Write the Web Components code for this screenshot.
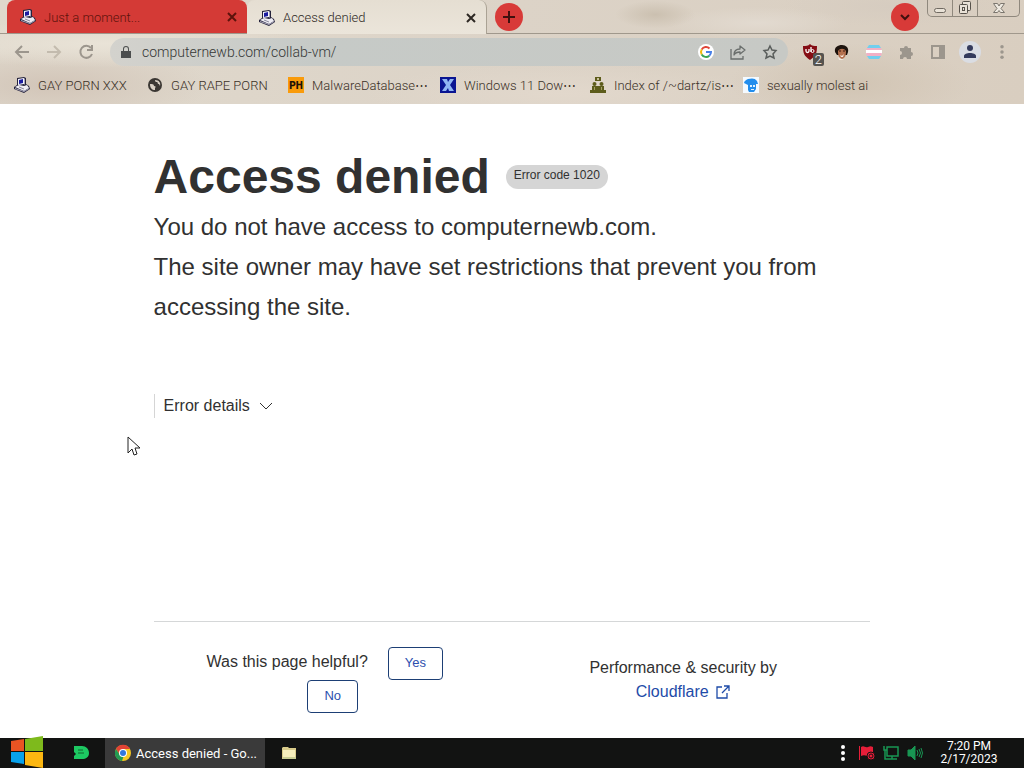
<!DOCTYPE html>
<html lang="en">
<head>
<meta charset="utf-8">
<meta name="viewport" content="width=device-width, initial-scale=1">
<title>Access denied</title>
<style>
    html, body {
        height: 100%;
        margin: 0;
    }

    body {
        font-family: Roboto, "Liberation Sans", sans-serif;
        font-size: 13px;
        background: #fff;
    }
</style>
</head>
<body>
<vm-desktop></vm-desktop>

<script>
const icons = {
    pc: `<svg viewBox="0 0 16 16"><path d="M3 1l7-1 2 1v6l3 2 1 3-6 4-10-4v-2l3-2z" fill="#25233c"/><path d="M4 2l6-1v6l-6 1z" fill="#f4f4fb"/><path d="M5 3l4-1v4l-4 1z" fill="#1b1ba0"/><path d="M10 1l1 1v6l-1-1z" fill="#a9a7bd"/><path d="M1 10l4-2 5 1 3-1 2 3-5 3z" fill="#efedf4"/><path d="M1 11l9 3v1l-9-3zM10 14l5-3v1l-5 3z" fill="#aaa8bb"/><path d="M5 10l5 2" stroke="#8a889b"/></svg>`,
    globe: `<svg viewBox="0 0 16 16"><circle cx="8" cy="8" r="7" fill="#3b3733"/><path d="M3 7c2 0 4 0 4 2 2 0 2 1 1 2v2c-3 0-5-2-5-6zM8 3c0 2 1 2 2 2s0 2 2 2l1 2c1-3-1-6-5-6z" fill="#d8cfc3"/></svg>`,
    ph: `<svg viewBox="0 0 16 16"><path d="M0 0h16v16H0z" fill="#f99b0b"/><text x="8" y="12" font-size="10" font-weight="900" text-anchor="middle" fill="#1c1206" font-family="Roboto">PH</text></svg>`,
    x: `<svg viewBox="0 0 16 16"><path d="M0 0h16v16H0z" fill="#0a1592"/><path d="M2 2h5l1 3 2-3h4l-4 6 4 6h-5l-1-3-2 3H2l4-6z" fill="#8fb5f3"/></svg>`,
    index: `<svg viewBox="0 0 16 16" fill="#5d5c1b"><path d="M5 0h6v4H5z"/><path d="M7 1h2v2H7z" fill="#c9c19b"/><circle cx="4.500" cy="7" r="2"/><circle cx="11.500" cy="7" r="2"/><path d="M2 9h12v4h2v3H0v-3h2z"/><path d="M4 10h1v3H4zM11 10h1v3h-1z" fill="#a59f66"/></svg>`,
    face: `<svg viewBox="0 0 16 16"><path d="M0 0h16v16H0z" fill="#f4faff"/><path d="M1 6c0-2 2-3 4-4 4-1 7-1 9 2l1 3h-2v5l-2 3H6l-1-2V8z" fill="#238eed"/><path d="M7 8h2v2H7zM10 8h2v2h-2zM8 12h3v1H8z" fill="#e2f2ff"/></svg>`,
    back: `<svg viewBox="0 0 16 16" fill="none" stroke="currentColor" stroke-width="2"><path d="M15 8H2M8 2L2 8l6 6"/></svg>`,
    forward: `<svg viewBox="0 0 16 16" fill="none" stroke="currentColor" stroke-width="2"><path d="M1 8h13M8 2l6 6-6 6"/></svg>`,
    reload: `<svg viewBox="0 0 16 16" fill="none" stroke="currentColor" stroke-width="2"><path d="M13 4a6 6 0 1 0 1 6"/><path d="M14 1v5H9"/></svg>`,
    lock: `<svg viewBox="0 0 16 16"><path d="M5 7V5a3 3 0 0 1 6 0v2h2v7H3V7zm1 0h4V5a2 2 0 0 0-4 0z" fill="#4c4e4e"/></svg>`,
    google: `<svg viewBox="0 0 16 16" fill="none" stroke-width="2"><circle cx="8" cy="8" r="8" fill="#fff"/><path d="M11.500 4.500A5 5 0 0 0 3.700 5.500" stroke="#df4639"/><path d="M3.700 5.500a5 5 0 0 0 0 5" stroke="#f2b90c"/><path d="M3.700 10.500a5 5 0 0 0 7.600 1.200" stroke="#39a652"/><path d="M11.300 11.700A5 5 0 0 0 13 8H8" stroke="#4780e8"/></svg>`,
    share: `<svg viewBox="0 0 16 16" fill="none" stroke="#6a6e6c" stroke-width="1.300"><path d="M1 5v10h12v-3"/><path d="M4 11c0-4 2-6 6-6V2l5 4-5 4V8c-3 0-5 1-6 3z" stroke-linejoin="round"/></svg>`,
    star: `<svg viewBox="0 0 16 16" fill="none" stroke="#5a5e5c" stroke-width="1.500"><path d="M8 2l2 4 4 .500-3 3.500 1 4-4-2-4 2 1-4-3-3.500L6 6z"/></svg>`,
    shield: `<svg viewBox="0 0 16 16"><path d="M8 0c2 2 4 2 7 2 0 7-1 10-7 14C2 12 1 9 1 2c3 0 5 0 7-2z" fill="#850d14"/><path d="M4 5v2a1 1 0 0 0 3 0V5M9 3v5" stroke="#fff" stroke-width="1.300" fill="none"/><circle cx="10.500" cy="7" r="1.500" stroke="#fff" fill="none"/></svg>`,
    man: `<svg viewBox="0 0 16 16"><path d="M1 8C0 3 4 1 8 1s7 3 6 7l-1 3H3z" fill="#1d130d"/><path d="M4 7c2-3 6-3 8 0 0 5-1 7-4 8-3-1-4-3-4-8z" fill="#b4714f"/><path d="M5 7h2M9 7h2" stroke="#38190f"/><path d="M6 11q2 2 4-1l-1 3H7z" fill="#f8e9df"/><path d="M4 13l3 2h3l-2 1H5z" fill="#f0e8df"/></svg>`,
    flag: `<svg viewBox="0 0 16 16"><path d="M3 1h10l2 3H1z" fill="#71cfee"/><path d="M1 4h14l1 3H0z" fill="#f2b0c5"/><path d="M0 6h16v4H0z" fill="#fff"/><path d="M0 9h16l-1 3H1z" fill="#f2b0c5"/><path d="M1 12h14l-2 3H3z" fill="#71cfee"/></svg>`,
    puzzle: `<svg viewBox="0 0 16 16"><path d="M2 4h4a2 2 0 1 1 4 0h3v4a2 2 0 1 1 0 4v3H9a2 2 0 0 0-4 0H2v-4a2 2 0 0 0 0-4z" fill="#9c968d"/></svg>`,
    panel: `<svg viewBox="0 0 16 16"><path d="M1 1h14v14H1zm2 2v10h6V3z" fill="#9c968d" fill-rule="evenodd"/></svg>`,
    person: `<svg viewBox="0 0 24 24"><circle cx="12" cy="12" r="11" fill="#dadde3"/><circle cx="12" cy="8" r="3" fill="#343b5c"/><path d="M6 18v-2c0-4 12-4 12 0v2z" fill="#343b5c"/></svg>`,
    dots: `<svg viewBox="0 0 16 16" fill="currentColor"><circle cx="8" cy="2" r="2"/><circle cx="8" cy="8" r="2"/><circle cx="8" cy="14" r="2"/></svg>`,
    close: `<svg viewBox="0 0 16 16" fill="none" stroke="currentColor" stroke-width="2"><path d="M4 4l8 8M12 4l-8 8"/></svg>`,
    plus: `<svg viewBox="0 0 16 16" fill="none" stroke="currentColor" stroke-width="2"><path d="M8 2v12M2 8h12"/></svg>`,
    down: `<svg viewBox="0 0 16 16" fill="none" stroke="currentColor" stroke-width="2"><path d="M4 6l4 4 4-4"/></svg>`,
    chevron: `<svg viewBox="0 0 16 16" fill="none" stroke="currentColor"><path d="M2 5l6 6 6-6"/></svg>`,
    minimize: `<svg viewBox="0 0 16 16" fill="#e9e2d7" stroke="#6f6961"><rect x="2.500" y="8.500" width="11" height="4" rx="2"/></svg>`,
    restore: `<svg viewBox="0 0 16 16" fill="#e9e2d7" stroke="#57524b"><rect x="5.500" y="1.500" width="8" height="9" rx="1"/><rect x="2.500" y="4.500" width="8" height="9" rx="1"/><rect x="5.500" y="7.500" width="2" height="3"/></svg>`,
    quit: `<svg viewBox="0 0 16 16" fill="#eee9e0" stroke="#7b766e"><path d="M2.500 3.500h4L8 6l1.500-2.500h4l-3.500 5 3.500 4h-4L8 10.500l-1.500 2h-4l3.500-4z"/></svg>`,
    external: `<svg viewBox="0 0 16 16" fill="none" stroke="currentColor" stroke-width="1.300"><path d="M7 3H2v11h10V9M9 2h5v5M14 2L7 9"/></svg>`,
    windows: `<svg viewBox="0 0 32 32"><path d="M0 5l13-2v12H0z" fill="#ea5423"/><path d="M14 3l18-3v15H14z" fill="#7eba1c"/><path d="M0 16h13v12L0 26z" fill="#08a2ec"/><path d="M14 16h18v16l-18-3z" fill="#fcb711"/></svg>`,
    green: `<svg viewBox="0 0 16 16"><path d="M1 1h8c4 0 7 3 7 7s-3 6-7 6H1v-3l2-2-2-2z" fill="#1dc962"/><path d="M5 5h5M5 8h6" stroke="#12672f"/></svg>`,
    chrome: `<svg viewBox="0 0 16 16"><circle cx="8" cy="8" r="8" fill="#f5c722"/><path d="M1 4a8 8 0 0 1 14 0H8L5 10z" fill="#e24335"/><path d="M1 4l4 6h4l-2 6A8 8 0 0 1 1 4z" fill="#229a52"/><circle cx="8" cy="8" r="4" fill="#fff"/><circle cx="8" cy="8" r="3" fill="#3277dd"/></svg>`,
    folder: `<svg viewBox="0 0 16 16"><path d="M1 3l1-1h5l1 1h7v11H1z" fill="#d9cc8b"/><path d="M2 5h12v8H2z" fill="#f5eebd"/><path d="M2 12h13v2H2z" fill="#c9ce94"/></svg>`,
    alert: `<svg viewBox="0 0 16 16"><path d="M0 1h1v14H0z" fill="#e61e39"/><path d="M2 2c3-2 4 1 7 0 2-1 3-1 5 0v9c-3-1-3 1-6 0-2-1-4-1-6 0z" fill="#e61e39"/><circle cx="12" cy="11" r="4" fill="#e61e39" stroke="#111"/><circle cx="12" cy="11" r="2" fill="none" stroke="#111"/></svg>`,
    network: `<svg viewBox="0 0 16 16" fill="none" stroke="#189653" stroke-width="1.500"><path d="M4 2h11v9H4zM9 11v3M5 14h9M1 1v4h3M2 5v9h3"/></svg>`,
    sound: `<svg viewBox="0 0 16 16" fill="none" stroke="#189653"><path d="M1 5h3l4-4v14l-4-4H1z" fill="#189653"/><path d="M10 5q2 3 0 6M12 4q3 4 0 8M14 3q3 5 0 10"/></svg>`,
    cursor: `<svg viewBox="0 0 14 20"><path d="M1 1v16l4-4 2 6 3-1-2-6h5z" fill="#fff" stroke="#222" stroke-linejoin="round"/></svg>`
};

function define(name, html) {
    const template = document.createElement('template');
    template.innerHTML = html;

    window.customElements.define(name, class extends HTMLElement {
        constructor() {
            super();
            this.attachShadow({ mode: 'open' });
            this.shadowRoot.appendChild(template.content.cloneNode(true));

            // the host's label names the control inside
            const control = this.shadowRoot.querySelector('[data-label]');
            if (control && this.getAttribute('label')) {
                control.setAttribute('aria-label', this.getAttribute('label'));
            }
        }
    });
}

class UiIcon extends HTMLElement {
    constructor() {
        super();
        this.attachShadow({ mode: 'open' });
    }

    connectedCallback() {
        this.shadowRoot.innerHTML = `
            <style>
                :host {
                    display: block;
                    flex: none;
                    width: var(--icon-size, 16px);
                }

                svg {
                    display: block;
                    width: 100%;
                    overflow: visible;
                }
            </style>
            ${icons[this.getAttribute('name')]}
        `;
    }
}

window.customElements.define('ui-icon', UiIcon);

define('icon-button', `
    <style>
        :host {
            display: block;
            flex: none;
            width: 32px;
            color: #9c968d;
        }

        button {
            display: flex;
            position: relative;
            align-items: center;
            justify-content: center;
            width: 100%;
            height: 28px;
            padding: 0;
            border: 0;
            color: inherit;
            font: inherit;
            background: none;
        }

        ::slotted(span) {
            position: absolute;
            right: 2px;
            bottom: 0;
            padding: 0 2px;
            border-radius: 2px;
            color: #fff;
            line-height: 13px;
            background: #55534f;
        }
    </style>
    <button type="button" data-label><slot></slot></button>
`);

define('round-button', `
    <style>
        :host {
            display: block;
            flex: none;
            margin-top: 3px;
        }

        button {
            display: flex;
            align-items: center;
            justify-content: center;
            width: 28px;
            height: 28px;
            padding: 0;
            border: 0;
            border-radius: 50%;
            color: #40100e;
            background: #d83a38;
        }
    </style>
    <button type="button" data-label><slot></slot></button>
`);

define('browser-tab', `
    <style>
        :host {
            display: flex;
            box-sizing: border-box;
            flex: 0 1 240px;
            align-items: center;
            gap: 8px;
            min-width: 0;
            height: 33px;
            padding: 1px 7px 0 13px;
            border-radius: 8px 8px 0 0;
            color: #5c130c;
            background: #d43a36;
        }

        :host([active]) {
            height: 34px;
            padding-left: 12px;
            border-right: 1px solid #aaa294;
            color: #2d2823;
            background: linear-gradient(#e5ded2, #ebe5da);
        }

        a {
            overflow: hidden;
            flex: 1;
            color: inherit;
            text-decoration: none;
            white-space: nowrap;
        }

        button {
            padding: 0;
            border: 0;
            color: inherit;
            background: none;
        }
    </style>
    <slot name="icon"></slot>
    <a href="#"><slot></slot></a>
    <button type="button" aria-label="Close tab"><ui-icon name="close"></ui-icon></button>
`);

define('window-buttons', `
    <style>
        :host {
            display: flex;
            flex: none;
            border: 1px solid #8f887d;
            border-top: 0;
            border-radius: 0 0 5px 5px;
        }

        button {
            display: flex;
            align-items: center;
            justify-content: center;
            width: 25px;
            height: 16px;
            padding: 0;
            border: 0;
            border-right: 1px solid #8f887d;
            background: none;
        }

        button:last-child {
            width: 41px;
            border: 0;
        }
    </style>
    <button type="button" aria-label="Minimize"><ui-icon name="minimize"></ui-icon></button>
    <button type="button" aria-label="Restore"><ui-icon name="restore"></ui-icon></button>
    <button type="button" aria-label="Close"><ui-icon name="quit"></ui-icon></button>
`);

define('tab-strip', `
    <style>
        :host {
            display: flex;
            align-items: flex-start;
            height: 34px;
            padding: 0 4px 0 7px;
            background: linear-gradient(#a0988c, #a0988c) bottom / 100% 1px no-repeat;
        }

        round-button:first-of-type {
            margin-left: 8px;
        }

        round-button:last-of-type {
            margin-right: 8px;
            margin-left: auto;
        }
    </style>
    <browser-tab><ui-icon slot="icon" name="pc"></ui-icon>Just a moment...</browser-tab>
    <browser-tab active><ui-icon slot="icon" name="pc"></ui-icon>Access denied</browser-tab>
    <round-button label="New tab"><ui-icon name="plus"></ui-icon></round-button>
    <round-button label="Search tabs"><ui-icon name="down"></ui-icon></round-button>
    <window-buttons></window-buttons>
`);

define('address-bar', `
    <style>
        :host {
            display: flex;
            flex: 1;
            align-items: center;
            gap: 8px;
            min-width: 0;
            height: 28px;
            margin: 0 6px 0 8px;
            padding: 0 2px 0 8px;
            border-radius: 14px;
            background: linear-gradient(90deg, #d3d2cd, #c6cac7 30%, #c7c9c5);
        }

        input {
            flex: 1;
            min-width: 0;
            padding: 0;
            border: 0;
            outline: 0;
            color: #353736;
            font: inherit;
            font-size: 14px;
            background: none;
        }

        div {
            display: flex;
        }
    </style>
    <ui-icon name="lock"></ui-icon>
    <input type="text" aria-label="Address" value="computernewb.com/collab-vm/">
    <div>
        <icon-button label="Search"><ui-icon name="google"></ui-icon></icon-button>
        <icon-button label="Share"><ui-icon name="share"></ui-icon></icon-button>
        <icon-button label="Bookmark this page"><ui-icon name="star"></ui-icon></icon-button>
    </div>
`);

define('tool-bar', `
    <style>
        :host {
            display: flex;
            align-items: center;
            height: 36px;
            padding: 0 6px;
        }

        .faint {
            color: #c3bbae;
        }

        .avatar {
            --icon-size: 24px;
        }

        icon-button:last-of-type {
            --icon-size: 14px;
        }
    </style>
    <icon-button label="Back"><ui-icon name="back"></ui-icon></icon-button>
    <icon-button class="faint" label="Forward"><ui-icon name="forward"></ui-icon></icon-button>
    <icon-button label="Reload"><ui-icon name="reload"></ui-icon></icon-button>
    <address-bar></address-bar>
    <icon-button label="Blocker"><ui-icon name="shield"></ui-icon><span>2</span></icon-button>
    <icon-button label="Portrait"><ui-icon name="man"></ui-icon></icon-button>
    <icon-button label="Flag"><ui-icon name="flag"></ui-icon></icon-button>
    <icon-button label="Extensions"><ui-icon name="puzzle"></ui-icon></icon-button>
    <icon-button label="Side panel"><ui-icon name="panel"></ui-icon></icon-button>
    <icon-button class="avatar" label="Profile"><ui-icon name="person"></ui-icon></icon-button>
    <icon-button label="Menu"><ui-icon name="dots"></ui-icon></icon-button>
`);

define('bookmark-link', `
    <style>
        :host {
            display: block;
        }

        a {
            display: flex;
            align-items: center;
            gap: 8px;
            color: #3a3026;
            text-decoration: none;
            white-space: nowrap;
        }
    </style>
    <a href="#"><slot name="icon"></slot><span><slot></slot></span></a>
`);

define('bookmark-bar', `
    <style>
        :host {
            display: grid;
            overflow: hidden;
            grid-template-columns: 133px 141px 152px 150px 153px auto;
            align-items: center;
            height: 30px;
            padding: 0 14px 4px;
        }
    </style>
    <bookmark-link><ui-icon slot="icon" name="pc"></ui-icon>GAY PORN XXX</bookmark-link>
    <bookmark-link><ui-icon slot="icon" name="globe"></ui-icon>GAY RAPE PORN</bookmark-link>
    <bookmark-link><ui-icon slot="icon" name="ph"></ui-icon>MalwareDatabase⋯</bookmark-link>
    <bookmark-link><ui-icon slot="icon" name="x"></ui-icon>Windows 11 Dow⋯</bookmark-link>
    <bookmark-link><ui-icon slot="icon" name="index"></ui-icon>Index of /~dartz/is⋯</bookmark-link>
    <bookmark-link><ui-icon slot="icon" name="face"></ui-icon>sexually molest ai</bookmark-link>
`);

define('browser-chrome', `
    <style>
        :host {
            display: block;
            flex: none;
            font-weight: 300;
            background:
                radial-gradient(ellipse 40px 14px at 64% 14%, #cbc0b0, transparent),
                radial-gradient(ellipse 90px 16px at 74% 22%, #e2dad0, transparent),
                radial-gradient(ellipse 110px 20px at 87% 6%, #d6ccc0, transparent),
                radial-gradient(ellipse 200px 24px at 10% 42%, #e9e3d7, transparent),
                radial-gradient(ellipse 160px 40px at 5% 82%, #d2c5b8, transparent),
                radial-gradient(ellipse 200px 30px at 55% 90%, #e2d8cc, transparent),
                radial-gradient(ellipse 120px 40px at 83% 80%, #d1c4b3, transparent),
                linear-gradient(100deg, #e0d9cd, #dcd3c7 50%, #d9cec0);
        }
    </style>
    <tab-strip></tab-strip>
    <tool-bar></tool-bar>
    <bookmark-bar></bookmark-bar>
`);

define('choice-button', `
    <style>
        :host {
            display: block;
        }

        button {
            height: 33px;
            padding: 0 16px 2px;
            border: 1px solid #1d3f75;
            border-radius: 4px;
            color: #2c4fae;
            font: inherit;
            font-size: 13px;
            line-height: 16px;
            background: #fff;
        }
    </style>
    <button type="button"><slot></slot></button>
`);

define('page-footer', `
    <style>
        :host {
            display: grid;
            grid-template-columns: 1fr 1fr;
            margin-top: 203px;
            padding-top: 25px;
            border-top: 1px solid #d5d7d8;
            line-height: 24px;
            text-align: center;
        }

        .feedback {
            display: flex;
            flex-wrap: wrap;
            align-items: center;
            justify-content: center;
            gap: 0 20px;
        }

        .feedback span {
            padding-bottom: 4px;
        }

        choice-button {
            margin-right: 16px;
        }

        choice-button:last-child {
            margin: 0 80px;
        }

        .credit {
            padding: 9px 16px 0 0;
        }

        a {
            display: flex;
            align-items: center;
            justify-content: center;
            gap: 6px;
            color: #1e4ba8;
            text-decoration: none;
        }
    </style>
    <div class="feedback">
        <span>Was this page helpful?</span>
        <choice-button>Yes</choice-button>
        <choice-button>No</choice-button>
    </div>
    <div class="credit">
        Performance &amp; security by
        <a href="#">Cloudflare <ui-icon name="external"></ui-icon></a>
    </div>
`);

define('error-page', `
    <style>
        :host {
            display: block;
            width: 70%;
            margin: 0 auto;
            padding: 43px 0 24px;
            color: #313131;
            font-family: "Liberation Sans", Arial, sans-serif;
            font-size: 16px;
        }

        header {
            display: flex;
            flex-wrap: wrap;
            align-items: center;
            gap: 16px;
        }

        h1 {
            margin: 0;
            font-size: 48px;
            line-height: 60px;
        }

        header span {
            padding: 0 8px 4px;
            border-radius: 12px;
            font-size: 12px;
            line-height: 20px;
            background: #d5d5d5;
        }

        p {
            margin: 0;
            font-size: 24px;
            line-height: 40px;
        }

        .details {
            display: flex;
            align-items: center;
            gap: 8px;
            height: 24px;
            margin-top: 67px;
            padding: 0 9px;
            border: 0;
            border-left: 1px solid #d5d5d5;
            color: inherit;
            font: inherit;
            background: none;
        }
    </style>
    <header>
        <h1>Access denied</h1>
        <span>Error code 1020</span>
    </header>
    <p>You do not have access to computernewb.com.</p>
    <p>The site owner may have set restrictions that prevent you from accessing the site.</p>
    <button class="details" type="button">Error details <ui-icon name="chevron"></ui-icon></button>
    <page-footer></page-footer>
`);

define('task-bar', `
    <style>
        :host {
            display: flex;
            flex: none;
            align-items: center;
            height: 30px;
            padding: 0 21px 0 11px;
            color: #fff;
            background: #121312;
        }

        button {
            display: flex;
            align-items: center;
            gap: 5px;
            height: 30px;
            padding: 0;
            border: 0;
            color: inherit;
            font: inherit;
            background: none;
        }

        .start {
            --icon-size: 32px;
            margin-right: 30px;
            padding-bottom: 3px;
        }

        .task {
            width: 160px;
            margin: 0 16px;
            padding: 0 10px;
            white-space: nowrap;
            background: #3a3a3a;
        }

        .tray {
            display: flex;
            gap: 8px;
            margin-left: auto;
        }

        time {
            width: 68px;
            margin-left: 12px;
            font-size: 12px;
            line-height: 13px;
            text-align: center;
        }
    </style>
    <button class="start" type="button" aria-label="Start"><ui-icon name="windows"></ui-icon></button>
    <button type="button" aria-label="Deals"><ui-icon name="green"></ui-icon></button>
    <button class="task" type="button"><ui-icon name="chrome"></ui-icon>Access denied - Go...</button>
    <button type="button" aria-label="Files"><ui-icon name="folder"></ui-icon></button>
    <div class="tray">
        <button type="button" aria-label="More"><ui-icon name="dots"></ui-icon></button>
        <button type="button" aria-label="Alerts"><ui-icon name="alert"></ui-icon></button>
        <button type="button" aria-label="Network"><ui-icon name="network"></ui-icon></button>
        <button type="button" aria-label="Volume"><ui-icon name="sound"></ui-icon></button>
    </div>
    <time datetime="2023-02-17T19:20">7:20 PM<br>2/17/2023</time>
`);

define('vm-desktop', `
    <style>
        :host {
            display: flex;
            position: relative;
            flex-direction: column;
            min-height: 100%;
        }

        main {
            flex: 1;
            background: #fff;
        }

        .cursor {
            --icon-size: 14px;
            position: absolute;
            top: 436px;
            left: 127px;
        }

        task-bar {
            position: relative;
        }
    </style>
    <browser-chrome></browser-chrome>
    <main><error-page></error-page></main>
    <task-bar></task-bar>
    <ui-icon class="cursor" name="cursor"></ui-icon>
`);
</script>
</body>
</html>
